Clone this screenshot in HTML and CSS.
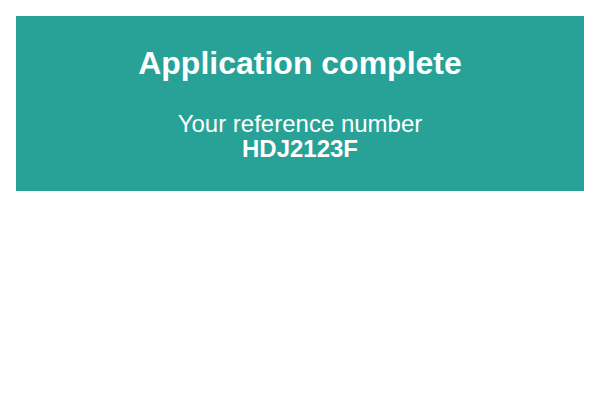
FILE: index.html
```html
<!DOCTYPE html>
<html lang="en">
<head>
<meta charset="utf-8">
<title>Application complete</title>
<link rel="stylesheet" href="styles.css">
</head>
<body>
<div class="panel">
  <h1 class="panel-title">Application complete</h1>
  <div class="panel-body">Your reference number<br><strong>HDJ2123F</strong></div>
</div>
</body>
</html>
```
FILE: styles.css
```css
html, body {
  margin: 0;
  padding: 0;
  background: #ffffff;
}
body {
  padding: 16px;
  font-family: "Liberation Sans", Arial, sans-serif;
}
.panel {
  background: #28a197;
  color: #ffffff;
  text-align: center;
  padding: 30px 16px;
  display: flex;
  flex-direction: column;
  gap: 30px;
}
.panel-title {
  margin: 0;
  font-size: 32px;
  line-height: 35px;
  font-weight: 700;
}
.panel-body {
  font-size: 24px;
  line-height: 25px;
}
.panel-body strong {
  font-weight: 700;
}
```
